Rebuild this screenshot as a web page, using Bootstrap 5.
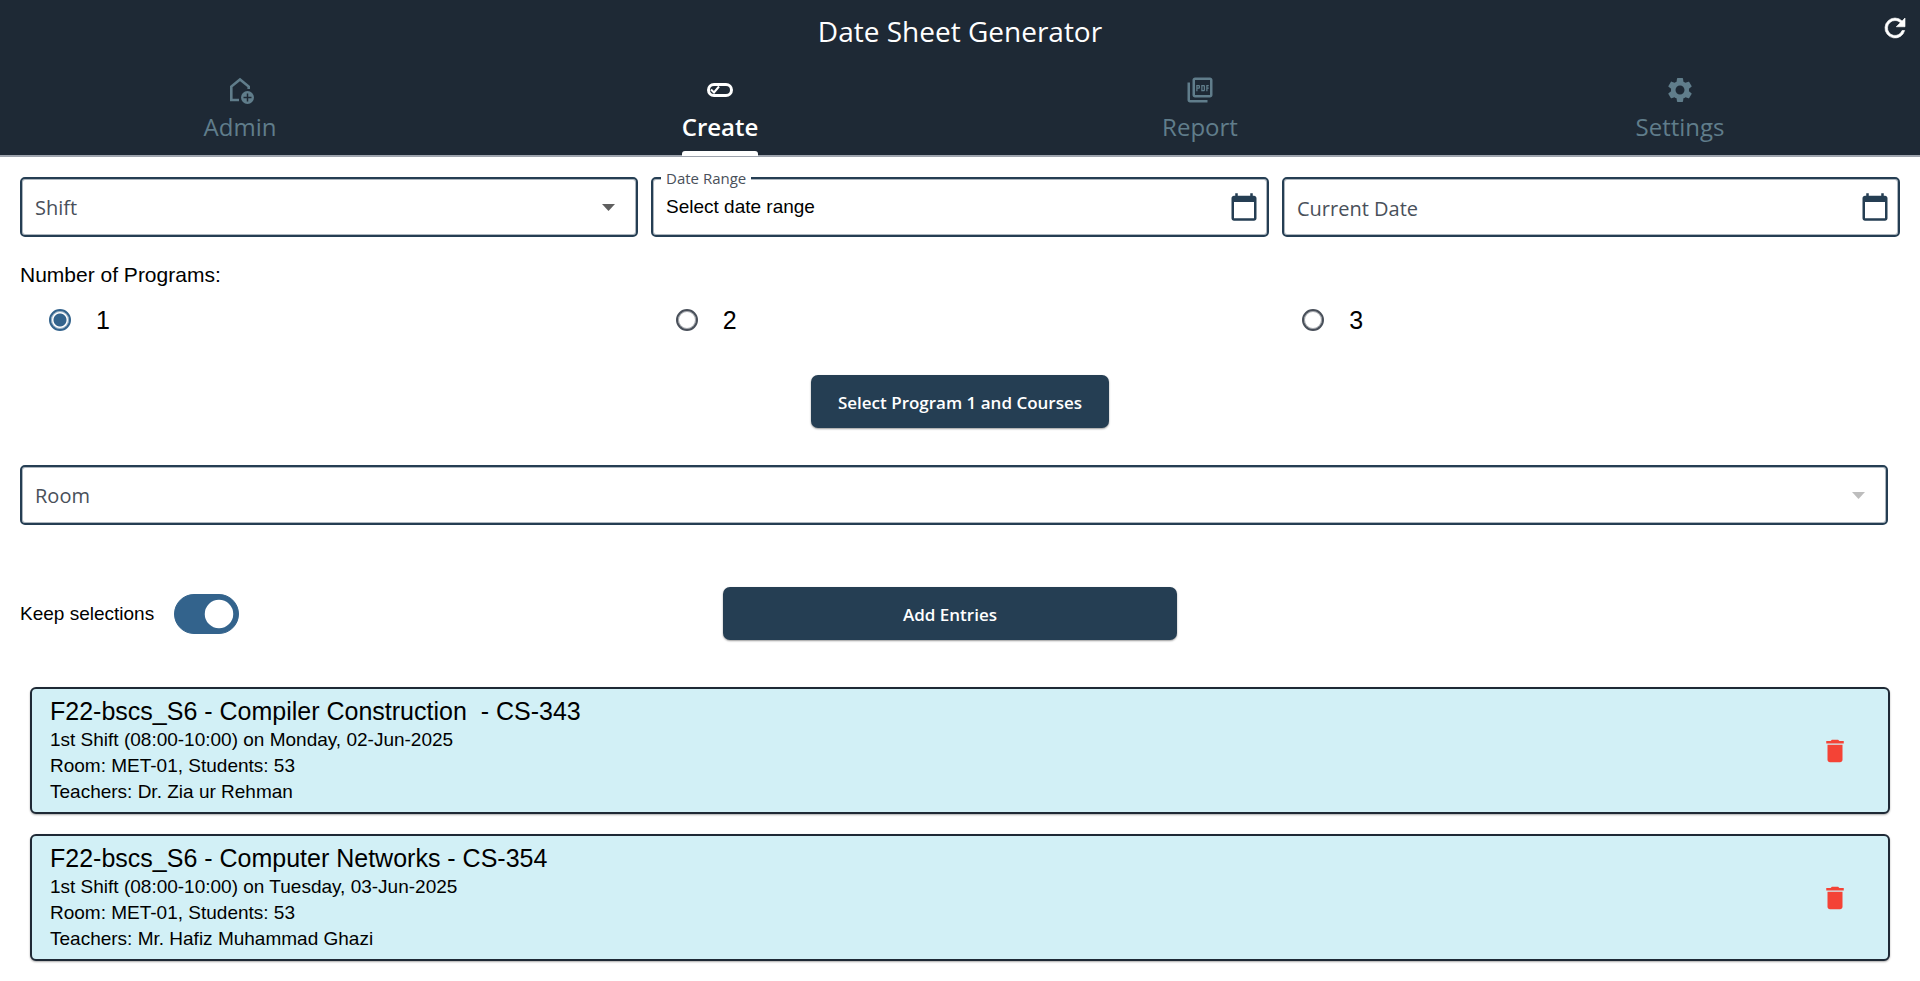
<!DOCTYPE html>
<html lang="en">
<head>
<meta charset="utf-8">
<meta name="viewport" content="width=device-width, initial-scale=1">
<title>Date Sheet Generator</title>
<link rel="stylesheet" href="https://cdn.jsdelivr.net/npm/bootstrap@5.3.0/dist/css/bootstrap.min.css">
<style>
  :root { --ink: #1e2935; --navy: #253e53; --accent: #33638c; --muted: #607d8b; --ui: "Open Sans", "Noto Sans", sans-serif; --text: "Liberation Sans", Arial, sans-serif; }
  body { font-family: var(--text); font-size: 19px; line-height: 26px; color: #000; background: #fff; }
  svg { display: block; flex: none; }
  .app-header { background: var(--ink); border-bottom: 2px solid #9da3ad; font-family: var(--ui); }
  .title-bar { display: grid; grid-template-columns: 1fr auto 1fr; align-items: start; height: 64px; padding: 13px 10px 0; }
  .title-bar h1 { font-size: 28px; line-height: 36px; grid-column: 2; }
  .tab-link { display: flex; flex-direction: column; align-items: center; height: 91px; padding: 11px 0 0; color: var(--muted); font-size: 24px; line-height: 32px; text-decoration: none; gap: 6px; }
  .tab-link:hover { color: #fff; }
  .tab-link.active { color: #fff; font-weight: 600; }
  .tab-text { position: relative; }
  .tab-link.active .tab-text::after { content: ""; position: absolute; left: 0; right: 0; top: 40px; height: 5px; background: #fff; border-radius: 3px 3px 0 0; }
  .page-body { padding: 20px; }
  .field-row { display: grid; grid-template-columns: repeat(3, 1fr); gap: 13px; }
  .field { position: relative; display: flex; align-items: center; height: 60px; border: 2px solid var(--navy); border-radius: 5px; box-shadow: inset 0 0 0 1px #253e5360; padding-right: 8px; }
  .field select, .field input { flex: 1; min-width: 0; height: 100%; border: 0; outline: 0; background: transparent; appearance: none; padding: 2px 13px 0; opacity: 1; }
  .field select, .field input { font-family: var(--ui); font-size: 20px; color: #49505a; }
  .field input::placeholder { color: #49505a; opacity: 1; }
  .field input[readonly] { font-family: var(--text); font-size: 19px; color: #000; padding-top: 0; }
  .field .arrow { position: absolute; right: 21px; pointer-events: none; }
  .float-label { position: absolute; left: 8px; top: -11px; padding: 0 5px; background: #fff; font-family: var(--ui); font-size: 15px; line-height: 20px; color: #49505a; }
  .icon-btn { border: 0; padding: 0; background: none; color: inherit; }
  .programs legend { font-size: 21px; line-height: 28px; margin: 0; float: none; }
  .programs .option { display: flex; align-items: center; gap: 25px; padding-left: 29px; font-size: 25px; line-height: 30px; }
  .option input { appearance: none; width: 22px; height: 22px; margin: 0; border: 2px solid #49505a; border-radius: 50%; box-shadow: inset 0 0 0 1px #49505a80; }
  .option input:checked { border-color: var(--accent); background: radial-gradient(circle, var(--accent) 6px, #fff 7px); box-shadow: inset 0 0 0 1px #33638c80; }
  .select-program { padding: 40px 0 37px; }
  .room-field { margin-right: 12px; }
  .action { height: 53px; padding: 2px 27px 0; border: 0; border-radius: 7px; background: var(--navy); color: #fff; font-family: var(--ui); font-weight: 600; font-size: 17px; box-shadow: 0 1px 2px #0006; }
  .action:hover { background: #30506b; color: #fff; }
  .entry-row { display: grid; grid-template-columns: 1fr 454px 1fr; align-items: center; margin: 62px 20px 0 0; }
  .keep-switch { gap: 20px; }
  .form-switch .form-check-input { width: 65px; height: 40px; margin: 0; float: none; }
  .form-switch .form-check-input:checked { background-color: var(--accent); border-color: var(--accent); }
  .entries { padding: 47px 10px 0; gap: 20px; }
  .entry { flex-direction: row; height: 127px; border: 2px solid var(--ink); border-radius: 6px; background: #d2f0f6; color: #000; padding: 8px 38px 8px 18px; box-shadow: 0 1px 2px #0005; }
  .entry h2 { font-size: 25px; line-height: 30px; margin: 0 0 1px; font-weight: 400; white-space: pre-wrap; }
  .entry .icon-btn { color: #f44336; }
</style>
</head>
<body>
<header class="app-header">
  <div class="title-bar text-white">
    <h1 class="m-0 fw-normal">Date Sheet Generator</h1>
    <button class="icon-btn ms-auto" type="button" aria-label="Refresh">
      <svg width="30" height="30" viewBox="0 0 24 24" fill="currentColor"><path d="M17.65 6.35A7.96 7.96 0 0 0 12 4a8 8 0 1 0 7.73 10h-2.08A6 6 0 1 1 12 6c1.66 0 3.14.69 4.22 1.78L13 11h7V4z" stroke="currentColor" stroke-width=".5"/></svg>
    </button>
  </div>
  <nav class="row g-0">
    <a class="col tab-link" href="#admin">
      <svg width="30" height="30" viewBox="0 0 30 30" fill="none" stroke="currentColor" stroke-width="2.6"><path d="M14 25H6.300V11.500L15 4.500L23.700 11.500V14"/><circle cx="22.500" cy="22.500" r="6.500" fill="currentColor" stroke="none"/><path d="M22.500 18.500v8M18.500 22.500h8" stroke="#1e2935" stroke-width="1.500"/></svg>
      <span class="tab-text">Admin</span></a>
    <a class="col tab-link active" href="#create" aria-current="page">
      <svg width="30" height="30" viewBox="0 0 30 30" fill="none" stroke="currentColor"><rect x="3.500" y="9.500" width="23" height="11" rx="5.500" stroke-width="3"/><path d="M6 14.500l3 3 5-6" stroke-width="2"/></svg>
      <span class="tab-text">Create</span></a>
    <a class="col tab-link" href="#report">
      <svg width="30" height="30" viewBox="0 0 24 24" fill="currentColor"><path d="M20 2H8c-1.100 0-2 .9-2 2v12c0 1.100.9 2 2 2h12c1.100 0 2-.9 2-2V4c0-1.100-.9-2-2-2zm0 14H8V4h12v12zM4 6H2v14c0 1.100.9 2 2 2h14v-2H4V6zm12 6V9c0-.55-.45-1-1-1h-2v5h2c.55 0 1-.45 1-1zm-2-3h1v3h-1V9zm4 2h1v-1h-1V9h1V8h-2v5h1zm-8 0h1c.55 0 1-.45 1-1V9c0-.55-.45-1-1-1H9v5h1v-2zm0-2h1v1h-1V9z"/></svg>
      <span class="tab-text">Report</span></a>
    <a class="col tab-link" href="#settings">
      <svg width="30" height="30" viewBox="0 0 24 24" fill="currentColor"><path d="M19.140 12.940c.04-.3.06-.61.06-.94 0-.32-.02-.64-.07-.94l2.030-1.580c.18-.14.23-.41.12-.61l-1.920-3.320c-.12-.22-.37-.29-.59-.22l-2.390.96c-.5-.38-1.030-.7-1.620-.94l-.36-2.540c-.04-.24-.24-.41-.48-.41h-3.840c-.24 0-.43.17-.47.41l-.36 2.540c-.59.24-1.130.57-1.620.94l-2.390-.96c-.22-.08-.47 0-.59.22L2.740 8.870c-.12.21-.08.47.12.61l2.030 1.580c-.05.3-.09.63-.09.94s.02.64.07.94l-2.030 1.580c-.18.14-.23.41-.12.61l1.920 3.320c.12.22.37.29.59.22l2.390-.96c.5.38 1.030.7 1.620.94l.36 2.540c.05.24.24.41.48.41h3.840c.24 0 .44-.17.47-.41l.36-2.540c.59-.24 1.130-.56 1.620-.94l2.390.96c.22.08.47 0 .59-.22l1.920-3.320c.12-.22.07-.47-.12-.61l-2.010-1.580zM12 15.600c-1.980 0-3.600-1.620-3.600-3.600s1.620-3.600 3.600-3.600 3.600 1.620 3.600 3.600-1.620 3.600-3.600 3.600z"/></svg>
      <span class="tab-text">Settings</span></a>
  </nav>
</header>

<main class="page-body">
  <div class="field-row">
    <div class="field">
      <select aria-label="Shift"><option>Shift</option></select>
      <svg class="arrow" width="13" height="7" viewBox="0 0 13 7" fill="#5f5f5f"><path d="M0 0h13L6.500 7z"/></svg>
    </div>
    <div class="field">
      <label class="float-label" for="range">Date Range</label>
      <input id="range" type="text" value="Select date range" readonly>
      <button class="icon-btn" type="button" aria-label="Pick date range"><svg width="30" height="30" viewBox="0 0 24 24" fill="#253e53"><path d="M20 3h-1V1h-2v2H7V1H5v2H4c-1.100 0-2 .9-2 2v16c0 1.100.9 2 2 2h16c1.100 0 2-.9 2-2V5c0-1.100-.9-2-2-2zm0 18H4V8h16v13z"/></svg></button>
    </div>
    <div class="field">
      <input type="text" placeholder="Current Date" aria-label="Current Date">
      <button class="icon-btn" type="button" aria-label="Pick current date"><svg width="30" height="30" viewBox="0 0 24 24" fill="#253e53"><path d="M20 3h-1V1h-2v2H7V1H5v2H4c-1.100 0-2 .9-2 2v16c0 1.100.9 2 2 2h16c1.100 0 2-.9 2-2V5c0-1.100-.9-2-2-2zm0 18H4V8h16v13z"/></svg></button>
    </div>
  </div>

  <fieldset class="programs mt-4">
    <legend>Number of Programs:</legend>
    <div class="row g-0 mt-3">
      <label class="col option"><input type="radio" name="programs" checked>1</label>
      <label class="col option"><input type="radio" name="programs">2</label>
      <label class="col option"><input type="radio" name="programs">3</label>
    </div>
  </fieldset>

  <div class="d-flex justify-content-center select-program">
    <button class="btn action" type="button">Select Program 1 and Courses</button>
  </div>

  <div class="field room-field">
    <select aria-label="Room" disabled><option>Room</option></select>
    <svg class="arrow" width="13" height="7" viewBox="0 0 13 7" fill="#bdbdbd"><path d="M0 0h13L6.500 7z"/></svg>
  </div>

  <div class="entry-row">
    <div class="form-check form-switch keep-switch d-flex align-items-center p-0 m-0">
      <label for="keep">Keep selections</label>
      <input class="form-check-input" type="checkbox" role="switch" id="keep" checked>
    </div>
    <button class="btn action" type="button">Add Entries</button>
  </div>

  <section class="entries d-flex flex-column">
    <article class="card entry align-items-center justify-content-between">
      <div>
        <h2>F22-bscs_S6 - Compiler Construction  - CS-343</h2>
        <div>1st Shift (08:00-10:00) on Monday, 02-Jun-2025</div>
        <div>Room: MET-01, Students: 53</div>
        <div>Teachers: Dr. Zia ur Rehman</div>
      </div>
      <button class="icon-btn" type="button" aria-label="Delete entry"><svg width="30" height="30" viewBox="0 0 24 24" fill="currentColor"><path d="M6 19c0 1.100.9 2 2 2h8c1.100 0 2-.9 2-2V7H6v12zM19 4h-3.500l-1-1h-5l-1 1H5v2h14V4z"/></svg></button>
    </article>
    <article class="card entry align-items-center justify-content-between">
      <div>
        <h2>F22-bscs_S6 - Computer Networks - CS-354</h2>
        <div>1st Shift (08:00-10:00) on Tuesday, 03-Jun-2025</div>
        <div>Room: MET-01, Students: 53</div>
        <div>Teachers: Mr. Hafiz Muhammad Ghazi</div>
      </div>
      <button class="icon-btn" type="button" aria-label="Delete entry"><svg width="30" height="30" viewBox="0 0 24 24" fill="currentColor"><path d="M6 19c0 1.100.9 2 2 2h8c1.100 0 2-.9 2-2V7H6v12zM19 4h-3.500l-1-1h-5l-1 1H5v2h14V4z"/></svg></button>
    </article>
  </section>
</main>
<script src="https://cdn.jsdelivr.net/npm/bootstrap@5.3.0/dist/js/bootstrap.bundle.min.js"></script>
</body>
</html>
